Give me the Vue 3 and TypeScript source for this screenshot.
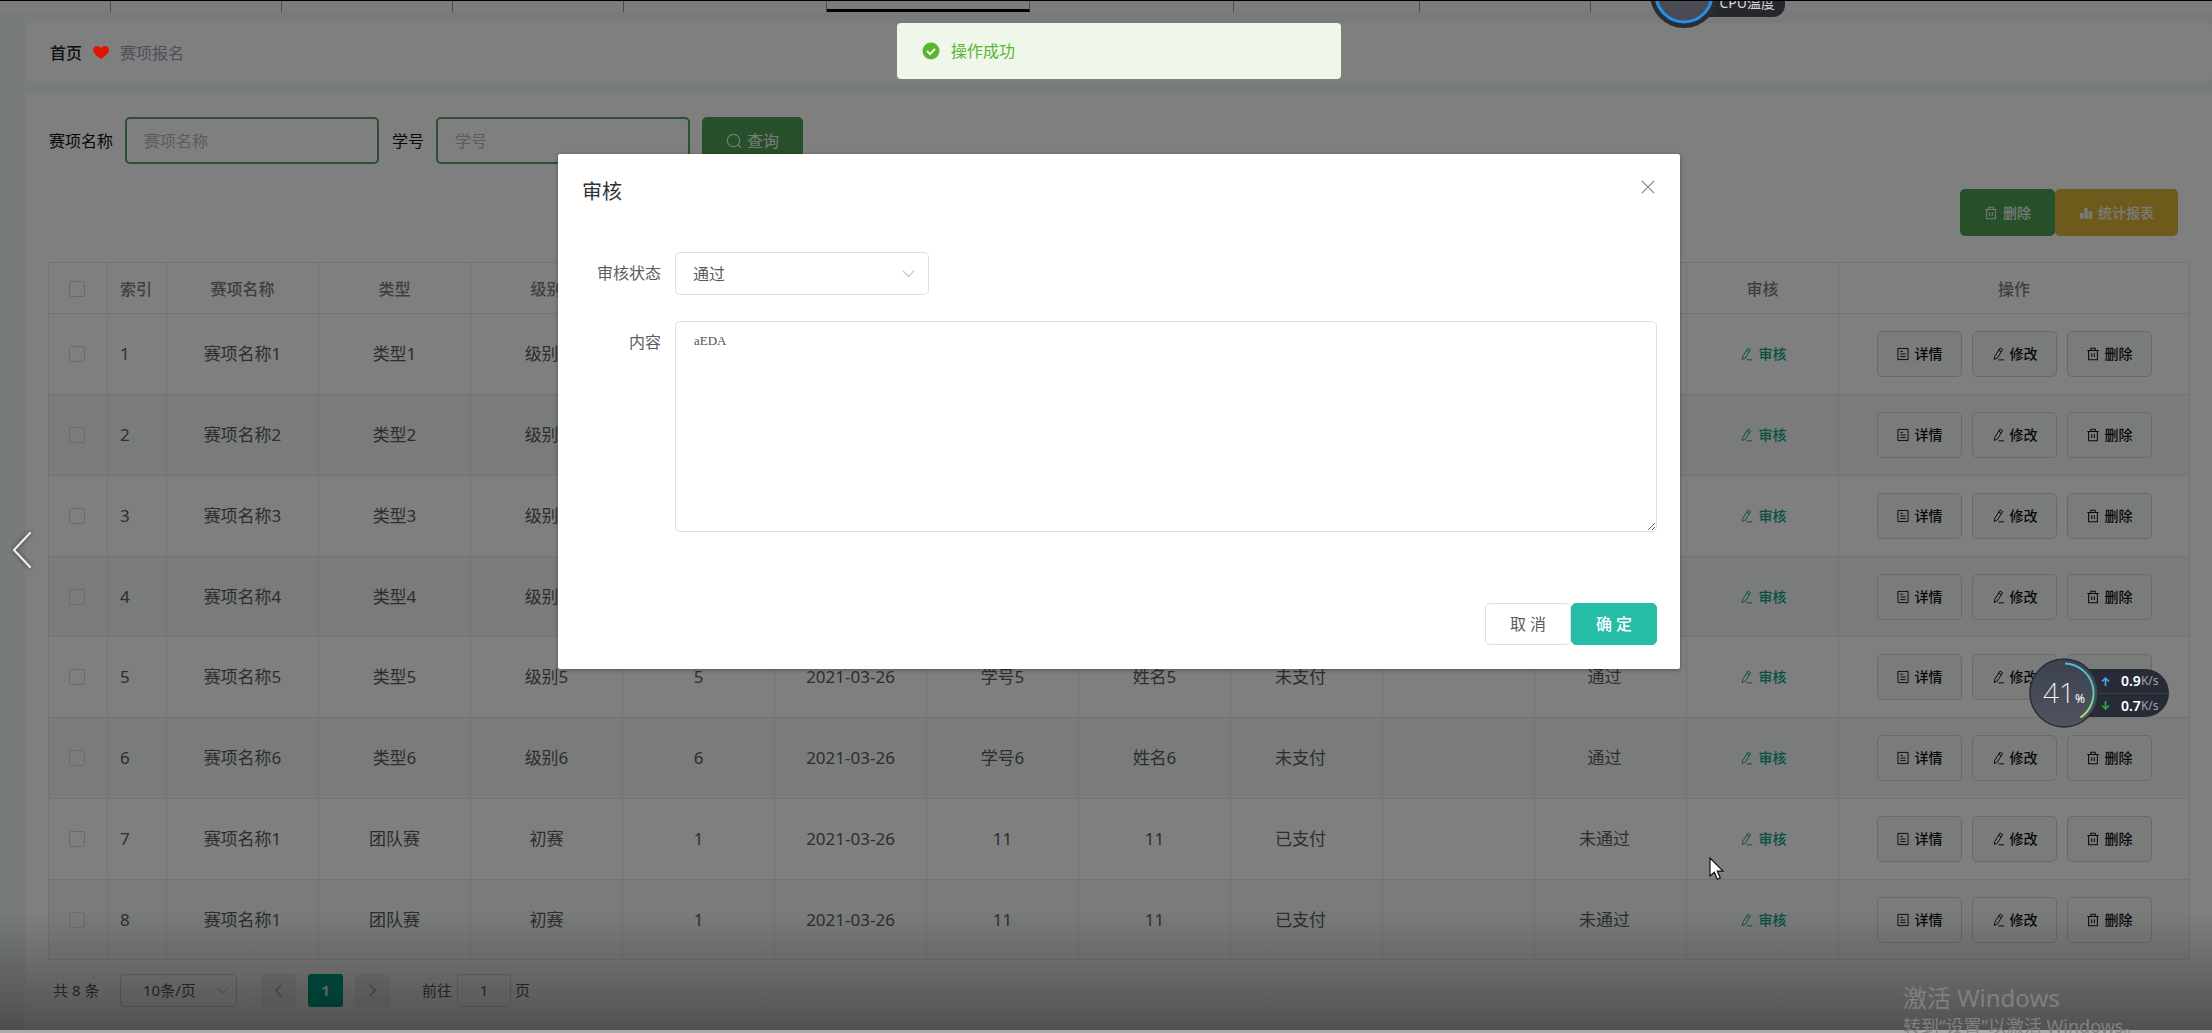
<script setup lang="ts">
import { ref } from 'vue'

interface Entry {
  name: string
  type: string
  level: string
  count: string
  date: string
  studentNo: string
  student: string
  payment: string
  reply: string
  status: string
}

const seeded: Entry[] = [1, 2, 3, 4, 5, 6].map((n) => ({
  name: `赛项名称${n}`,
  type: `类型${n}`,
  level: `级别${n}`,
  count: `${n}`,
  date: '2021-03-26',
  studentNo: `学号${n}`,
  student: `姓名${n}`,
  payment: '未支付',
  reply: '',
  status: '通过',
}))

const added: Entry[] = [7, 8].map(() => ({
  name: '赛项名称1',
  type: '团队赛',
  level: '初赛',
  count: '1',
  date: '2021-03-26',
  studentNo: '11',
  student: '11',
  payment: '已支付',
  reply: '',
  status: '未通过',
}))

const entries: Entry[] = [...seeded, ...added]
const headings = ['赛项名称', '类型', '级别', '人数', '报名日期', '学号', '姓名', '是否支付', '审核回复', '审核状态', '审核', '操作']
const fields: (keyof Entry)[] = ['name', 'type', 'level', 'count', 'date', 'studentNo', 'student', 'payment', 'reply', 'status']

const searchName = ref('')
const searchNo = ref('')
const auditStatus = ref('通过')
const auditContent = ref('aEDA')
const pageSize = ref('10条/页')
const gotoPage = ref('1')
</script>

<template>
  <div class="page">
    <svg class="symbols" aria-hidden="true">
      <symbol id="i-trash" viewBox="0 0 16 16">
        <path d="M1.5 4h13M3 4v10.5h10V4M5.5 3.8V1.5h5v2.3M6.5 7v4.5M9.5 7v4.5" fill="none" stroke="currentColor" stroke-width="1.2" />
      </symbol>
      <symbol id="i-edit" viewBox="0 0 16 16">
        <path d="M10.3 1.2l3 1.8-6 9.6-3.6 1.7.6-3.6zM8.8 3.6l3 1.8M8.5 14.7h6.5" fill="none" stroke="currentColor" stroke-width="1.1" stroke-linejoin="round" />
      </symbol>
      <symbol id="i-doc" viewBox="0 0 16 16">
        <path d="M2.200 1.600h11.600v12.800H2.200zM5 5h3M5 8h6M5 11h6" fill="none" stroke="currentColor" stroke-width="1.1" />
      </symbol>
      <symbol id="i-bars" viewBox="0 0 16 16">
        <path d="M1 8h4v6.5H1zM6 2h4v12.5H6zM11 6h4v8.5h-4z" fill="currentColor" />
      </symbol>
      <symbol id="i-search" viewBox="0 0 16 16">
        <path d="M12 11.8l3 3" fill="none" stroke="currentColor" stroke-width="1.2" />
        <circle cx="7.5" cy="7.5" r="6.2" fill="none" stroke="currentColor" stroke-width="1.2" />
      </symbol>
      <symbol id="i-down" viewBox="0 0 16 16">
        <path d="M2 5l6 6 6-6" fill="none" stroke="currentColor" stroke-width="1.3" />
      </symbol>
    </svg>

    <nav class="tabs">
      <span class="tab first"></span>
      <span class="tab"></span>
      <span class="tab"></span>
      <span class="tab"></span>
      <span class="tab wide"></span>
      <span class="tab active"></span>
      <span class="tab active-next"></span>
      <span class="tab mid"></span>
      <span class="tab"></span>
    </nav>

    <main class="content">
      <div class="crumbs">
        <a href="#" class="home">首页</a>
        <svg class="heart" viewBox="0 0 17 14" aria-hidden="true"><path d="M8.500 14C4.500 10.500 0 8 0 4.200 0 1.600 2 0 4.300 0 6.200 0 7.700 1 8.500 2.400 9.300 1 10.800 0 12.700 0 15 0 17 1.600 17 4.200 17 8 12.500 10.500 8.500 14z" fill="#e01400" /></svg>
        <span class="here">赛项报名</span>
      </div>

      <section class="card">
        <form class="search" @submit.prevent>
          <label for="s-name">赛项名称</label>
          <input id="s-name" v-model="searchName" type="text" placeholder="赛项名称" />
          <label for="s-no">学号</label>
          <input id="s-no" v-model="searchNo" type="text" placeholder="学号" />
          <button type="submit" class="btn green large"><svg><use href="#i-search" /></svg>查询</button>
        </form>

        <div class="toolbar">
          <button type="button" class="btn green"><svg><use href="#i-trash" /></svg>删除</button>
          <button type="button" class="btn yellow"><svg><use href="#i-bars" /></svg>统计报表</button>
        </div>

        <table>
          <colgroup>
            <col class="c-small" /><col class="c-small" />
            <col v-for="n in 11" :key="n" />
            <col class="c-ops" />
          </colgroup>
          <thead>
            <tr>
              <th class="pick"><input type="checkbox" aria-label="全选" /></th>
              <th class="index">索引</th>
              <th v-for="h in headings" :key="h">{{ h }}</th>
            </tr>
          </thead>
          <tbody>
            <tr v-for="(e, i) in entries" :key="i">
              <td class="pick"><input type="checkbox" :aria-label="`选择 ${i + 1}`" /></td>
              <td class="index">{{ i + 1 }}</td>
              <td v-for="f in fields" :key="f" :class="f">{{ e[f] }}</td>
              <td><button type="button" class="link"><svg><use href="#i-edit" /></svg>审核</button></td>
              <td>
                <div class="ops">
                  <button type="button"><svg><use href="#i-doc" /></svg>详情</button>
                  <button type="button"><svg><use href="#i-edit" /></svg>修改</button>
                  <button type="button"><svg><use href="#i-trash" /></svg>删除</button>
                </div>
              </td>
            </tr>
          </tbody>
        </table>

        <div class="pager">
          <span class="total">共 8 条</span>
          <div class="size">
            <select v-model="pageSize" aria-label="每页条数"><option>10条/页</option></select>
            <svg><use href="#i-down" /></svg>
          </div>
          <button type="button" class="step prev" aria-label="上一页" disabled><svg><use href="#i-down" /></svg></button>
          <button type="button" class="step current">1</button>
          <button type="button" class="step next" aria-label="下一页" disabled><svg><use href="#i-down" /></svg></button>
          <label class="goto" for="goto">前往</label>
          <input id="goto" v-model="gotoPage" type="text" />
          <span class="unit">页</span>
        </div>
      </section>
    </main>

    <div class="mask">
      <div class="dialog" role="dialog" aria-labelledby="dlg-title">
        <header>
          <h2 id="dlg-title">审核</h2>
          <button type="button" class="close" aria-label="关闭">
            <svg viewBox="0 0 14 14"><path d="M1 1l12 12M13 1L1 13" fill="none" stroke="#909399" stroke-width="1.300" /></svg>
          </button>
        </header>
        <div class="field">
          <label for="a-status">审核状态</label>
          <div class="pick-status">
            <select id="a-status" v-model="auditStatus"><option>通过</option><option>未通过</option></select>
            <svg><use href="#i-down" /></svg>
          </div>
        </div>
        <div class="field">
          <label for="a-content">内容</label>
          <textarea id="a-content" v-model="auditContent"></textarea>
        </div>
        <footer>
          <button type="button">取 消</button>
          <button type="button" class="ok">确 定</button>
        </footer>
      </div>
    </div>

    <div class="toast-row">
      <div class="toast" role="alert">
        <svg viewBox="0 0 18 18" aria-hidden="true"><circle cx="9" cy="9" r="8.500" fill="#5cb531" /><path d="M5 9.200l3 3 5-5.400" fill="none" stroke="#fff" stroke-width="1.800" /></svg>
        操作成功
      </div>
    </div>

    <div class="cpu">
      <span class="cpu-label">CPU温度</span>
      <svg viewBox="0 0 70 70" aria-hidden="true"><circle cx="35" cy="35" r="34" fill="#2b2d35" /><circle cx="35" cy="35" r="28" fill="#4a4b54" stroke="#2492ea" stroke-width="3" /></svg>
    </div>

    <div class="net">
      <div class="rates">
        <div><svg viewBox="0 0 8 8"><path d="M4 8V1M1 4l3-3 3 3" fill="none" stroke="#46a5f0" stroke-width="1.500" /></svg><b>0.9</b><span>K/s</span></div>
        <div><svg viewBox="0 0 8 8"><path d="M4 0v7M1 4l3 3 3-3" fill="none" stroke="#2fa840" stroke-width="1.500" /></svg><b>0.7</b><span>K/s</span></div>
      </div>
      <div class="dial">
        <svg viewBox="0 0 70 70" aria-hidden="true">
          <defs>
            <linearGradient id="arc" x1="0" y1="0" x2="0" y2="1"><stop offset="0" stop-color="#48c0d8" /><stop offset="0.600" stop-color="#5cc9a8" /><stop offset="1" stop-color="#b8e070" /></linearGradient>
            <linearGradient id="disc" x1="0" y1="0" x2="0" y2="1"><stop offset="0" stop-color="#3b414e" /><stop offset="1" stop-color="#50545f" /></linearGradient>
          </defs>
          <circle cx="35" cy="35" r="34" fill="url(#disc)" stroke="#2a2d38" stroke-width="1.500" />
          <path d="M36 5.500A29.500 29.500 0 0 1 51.500 59.500" fill="none" stroke="url(#arc)" stroke-width="2" />
        </svg>
        <span class="load">41</span><span class="pct">%</span>
      </div>
    </div>

    <svg class="slide" viewBox="0 0 24 40" aria-hidden="true"><path d="M20 3L4 20l16 17" fill="none" stroke="#eee" stroke-width="2.200" stroke-linecap="round" /></svg>
    <svg class="cursor" viewBox="0 0 16 24" aria-hidden="true"><path d="M1 1v18l4.300-3.800 3 7 3-1.300-3-6.800H14z" fill="#fff" stroke="#111" stroke-width="1.200" /></svg>

    <div class="fade"></div>
    <div class="edge"></div>
    <div class="activate">
      <p class="big">激活 Windows</p>
      <p>转到“设置”以激活 Windows。</p>
    </div>
  </div>
</template>

<style>
body {
  margin: 0;
  background: #808080;
}
</style>

<style scoped>
* {
  box-sizing: border-box;
}
.page {
  position: relative;
  min-height: 100vh;
  overflow: hidden;
  background: #eff6f3;
  font-family: "Noto Sans", "Noto Sans CJK SC", sans-serif;
  font-size: 16px;
  line-height: 24px;
  color: #5a5c60;
}
button,
input,
select {
  font: inherit;
  color: inherit;
}
button {
  cursor: pointer;
}
svg {
  display: block;
  flex: none;
}
.symbols {
  position: absolute;
  width: 0;
  height: 0;
}
.tabs {
  display: flex;
  height: 12px;
  border-top: 1px solid #000;
  background: #fbf8fa;
}
.tab {
  width: 171px;
  border-right: 1px solid #999;
}
.tab.first {
  width: 111px;
}
.tab.wide {
  width: 203px;
}
.tab.active {
  width: 203px;
  border-bottom: 3px solid #000;
}
.tab.active-next {
  width: 204px;
}
.tab.mid {
  width: 186px;
}
.content {
  padding: 11px 0 0 25px;
}
.crumbs {
  display: flex;
  align-items: center;
  gap: 11px;
  height: 58px;
  padding: 1px 25px 0;
  border-radius: 4px;
  background: #fff;
}
.home {
  color: #222;
  font-weight: 500;
  text-decoration: none;
}
.heart {
  position: relative;
  z-index: 2;
  width: 16px;
  height: 13px;
}
.here {
  color: #97a0b4;
}
.card {
  margin-top: 12px;
  padding: 24px 22px 24px 23px;
  border-radius: 4px 0 0 4px;
  background: #fff;
}
.search {
  display: flex;
  align-items: center;
  gap: 12px;
  color: #111;
}
.search label {
  padding-left: 1px;
}
.search input {
  width: 254px;
  height: 47px;
  padding: 0 17px;
  border: 2px solid #5a9c62;
  border-radius: 5px;
  background: transparent;
  outline: none;
}
.search input::placeholder {
  color: #b4b8c0;
}
.btn {
  display: flex;
  align-items: center;
  gap: 5px;
  height: 47px;
  padding: 0 24px;
  border: 0;
  border-radius: 5px;
  color: #f4f4f4;
  font-size: 14px;
  font-weight: 500;
}
.btn svg,
.link svg,
.ops svg {
  width: 14px;
  height: 14px;
}
.btn.large {
  font-size: 16px;
  font-weight: 400;
}
.btn.large svg {
  width: 16px;
  height: 16px;
}
.green {
  background: #4e9e53;
}
.yellow {
  background: #dcb534;
}
.toolbar {
  display: flex;
  justify-content: flex-end;
  padding: 25px 12px 26px 0;
}
table {
  width: 100%;
  border-collapse: collapse;
  table-layout: fixed;
}
.c-small {
  width: 59px;
}
.c-ops {
  width: 351px;
}
th,
td {
  padding: 0;
  border: 1px solid #e3e7ea;
  text-align: center;
  white-space: nowrap;
}
td {
  font-size: 17px;
}
th {
  color: #7c7f85;
  font-weight: 500;
}
thead tr {
  height: 51px;
}
thead th {
  padding-top: 2px;
}
tbody tr {
  height: 81px;
}
tbody tr:nth-child(4n) {
  height: 80px;
}
tbody tr:nth-child(even) {
  background: #f4f9f7;
}
.payment,
.status {
  padding-right: 12px;
}
.pick {
  padding-left: 20px;
  text-align: left;
}
.index {
  padding-left: 12px;
  text-align: left;
}
.pick input {
  appearance: none;
  display: block;
  width: 16px;
  height: 16px;
  margin: 0;
  border: 1px solid #d4d7de;
  border-radius: 2px;
}
.link {
  display: flex;
  align-items: center;
  gap: 6px;
  margin: 0 auto;
  padding: 0;
  border: 0;
  background: none;
  color: #0fa388;
  font-size: 14px;
  font-weight: 500;
}
.ops {
  display: flex;
  justify-content: center;
  gap: 10px;
}
.ops button {
  display: flex;
  align-items: center;
  gap: 5px;
  height: 46px;
  padding: 0 18px;
  border: 1px solid #dccfd2;
  border-radius: 5px;
  background: #f4f9f7;
  color: #111;
  font-size: 14px;
  font-weight: 500;
}
.pager {
  display: flex;
  align-items: center;
  height: 34px;
  margin-top: 13px;
  padding-left: 5px;
  font-size: 15px;
}
.total {
  width: 49px;
}
.size {
  position: relative;
  width: 117px;
  margin: 0 24px 0 18px;
}
.size select {
  appearance: none;
  width: 100%;
  height: 33px;
  padding: 0 22px;
  border: 1px solid #d4d7de;
  border-radius: 4px;
  background: transparent;
}
.size svg {
  position: absolute;
  top: 10px;
  right: 8px;
  width: 13px;
  height: 13px;
  color: #c0c4cc;
}
.step {
  width: 35px;
  height: 33px;
  margin-right: 12px;
  padding: 0 10px;
  border: 0;
  border-radius: 3px;
  background: #f0f1f3;
  color: #a0a4ac;
  font-weight: 700;
}
.step svg {
  width: 15px;
  height: 15px;
}
.prev svg {
  transform: rotate(90deg);
}
.next svg {
  transform: rotate(-90deg);
}
.step.current {
  background: #00a88c;
  color: #fff;
}
.goto {
  margin-left: 20px;
}
#goto {
  width: 54px;
  height: 33px;
  margin: 0 4px 0 5px;
  padding: 0;
  border: 1px solid #d4d7de;
  border-radius: 4px;
  background: transparent;
  text-align: center;
}
.mask {
  position: absolute;
  inset: 0;
  z-index: 1;
  padding: 154px 0 0 26px;
  background: rgba(0, 0, 0, 0.5);
}
.dialog {
  position: relative;
  width: calc(50% + 29px);
  margin: 0 auto;
  padding: 24px 23px 24px 24px;
  border-radius: 2px;
  background: #fff;
  box-shadow: 0 1px 4px rgba(0, 0, 0, 0.35);
}
.dialog header {
  display: flex;
  justify-content: space-between;
  height: 74px;
}
.dialog h2 {
  margin: 0;
  color: #303133;
  font-size: 20px;
  font-weight: 400;
  line-height: 28px;
}
.close {
  width: 18px;
  height: 18px;
  padding: 2px;
  border: 0;
  background: none;
}
.close svg {
  width: 14px;
  height: 14px;
}
.field {
  display: flex;
  align-items: flex-start;
  gap: 14px;
  margin-bottom: 26px;
}
.field label {
  width: 79px;
  line-height: 43px;
  text-align: right;
}
.pick-status {
  position: relative;
  width: 254px;
}
.pick-status select {
  appearance: none;
  display: block;
  width: 100%;
  height: 43px;
  padding: 0 17px;
  border: 1px solid #dcdfe6;
  border-radius: 5px;
  background: #fff;
}
.pick-status svg {
  position: absolute;
  top: 14px;
  right: 13px;
  width: 15px;
  height: 15px;
  color: #c0c4cc;
}
.field textarea {
  flex: 1;
  height: 211px;
  padding: 8px 18px;
  border: 1px solid #dcdfe6;
  border-radius: 5px;
  color: #505256;
  font: 13px/22px "Liberation Serif", serif;
  outline: none;
}
.dialog footer {
  display: flex;
  justify-content: flex-end;
  margin-top: 71px;
}
.dialog footer button {
  width: 86px;
  height: 42px;
  padding: 0;
  border: 1px solid #dcdfe6;
  border-radius: 5px;
  background: #fff;
  font-size: 16px;
}
.dialog footer .ok {
  border-color: #25bda6;
  background: #25bda6;
  color: #fff;
  font-weight: 500;
}
.toast-row {
  position: absolute;
  z-index: 2;
  top: 23px;
  left: 26px;
  right: 0;
}
.toast {
  display: flex;
  align-items: center;
  gap: 11px;
  width: 444px;
  height: 56px;
  margin: 0 auto;
  padding: 0 25px;
  border-radius: 4px;
  background: #eff7ea;
  color: #5cb531;
}
.toast svg {
  width: 18px;
  height: 18px;
}
.cpu {
  position: absolute;
  z-index: 2;
  top: 1px;
  left: 1649px;
  width: 136px;
  height: 30px;
  overflow: hidden;
}
.cpu-label {
  position: absolute;
  top: -20px;
  right: 0;
  width: 100px;
  padding: 10px 10px 2px 0;
  border-radius: 0 12px 12px 0;
  background: #25272c;
  color: #d8d8d8;
  font-size: 14px;
  text-align: right;
}
.cpu svg {
  position: absolute;
  bottom: 2px;
  left: 0;
  width: 70px;
  height: 70px;
}
.net {
  position: absolute;
  z-index: 2;
  top: 658px;
  right: 43px;
  width: 140px;
  height: 70px;
}
.rates {
  position: absolute;
  top: 11px;
  right: 0;
  width: 100px;
  border-radius: 0 24px 24px 0;
  background: #272b36;
  color: #fff;
  font-size: 14px;
}
.rates div {
  display: flex;
  align-items: center;
  height: 24px;
  padding-left: 32px;
}
.rates div + div {
  border-top: 1px solid #3a3e48;
}
.rates svg {
  width: 9px;
  height: 9px;
  margin-right: 11px;
}
.rates b {
  font-weight: 600;
}
.rates span {
  color: #a0a3aa;
  font-size: 12px;
}
.dial {
  position: absolute;
  top: 0;
  left: 0;
  display: flex;
  align-items: baseline;
  width: 70px;
  height: 70px;
  padding: 18px 0 0 14px;
  color: #fff;
}
.dial svg {
  position: absolute;
  inset: 0;
  width: 70px;
  height: 70px;
}
.load,
.pct {
  position: relative;
}
.load {
  font-size: 28px;
  font-weight: 200;
  line-height: 32px;
}
.pct {
  font-size: 12px;
  line-height: 16px;
}
.slide {
  position: absolute;
  z-index: 2;
  top: 530px;
  left: 10px;
  width: 24px;
  height: 40px;
  filter: drop-shadow(0 0 2px rgba(0, 0, 0, 0.6));
}
.cursor {
  position: absolute;
  z-index: 2;
  top: 857px;
  left: 1709px;
  width: 16px;
  height: 24px;
}
.fade {
  position: absolute;
  z-index: 2;
  right: 0;
  bottom: 3px;
  left: 0;
  height: 120px;
  background: linear-gradient(rgba(0, 0, 0, 0), rgba(0, 0, 0, 0.36));
  pointer-events: none;
}
.edge {
  position: absolute;
  z-index: 2;
  right: 0;
  bottom: 0;
  left: 0;
  height: 3px;
  background: #aaa;
}
.activate {
  position: absolute;
  z-index: 3;
  right: 0;
  bottom: 0;
  width: 309px;
  height: 51px;
  overflow: hidden;
  color: #808080;
  font-size: 18px;
  white-space: nowrap;
}
.activate p {
  margin: 0;
  line-height: 24px;
}
.activate .big {
  font-size: 24px;
  line-height: 32px;
}
</style>
